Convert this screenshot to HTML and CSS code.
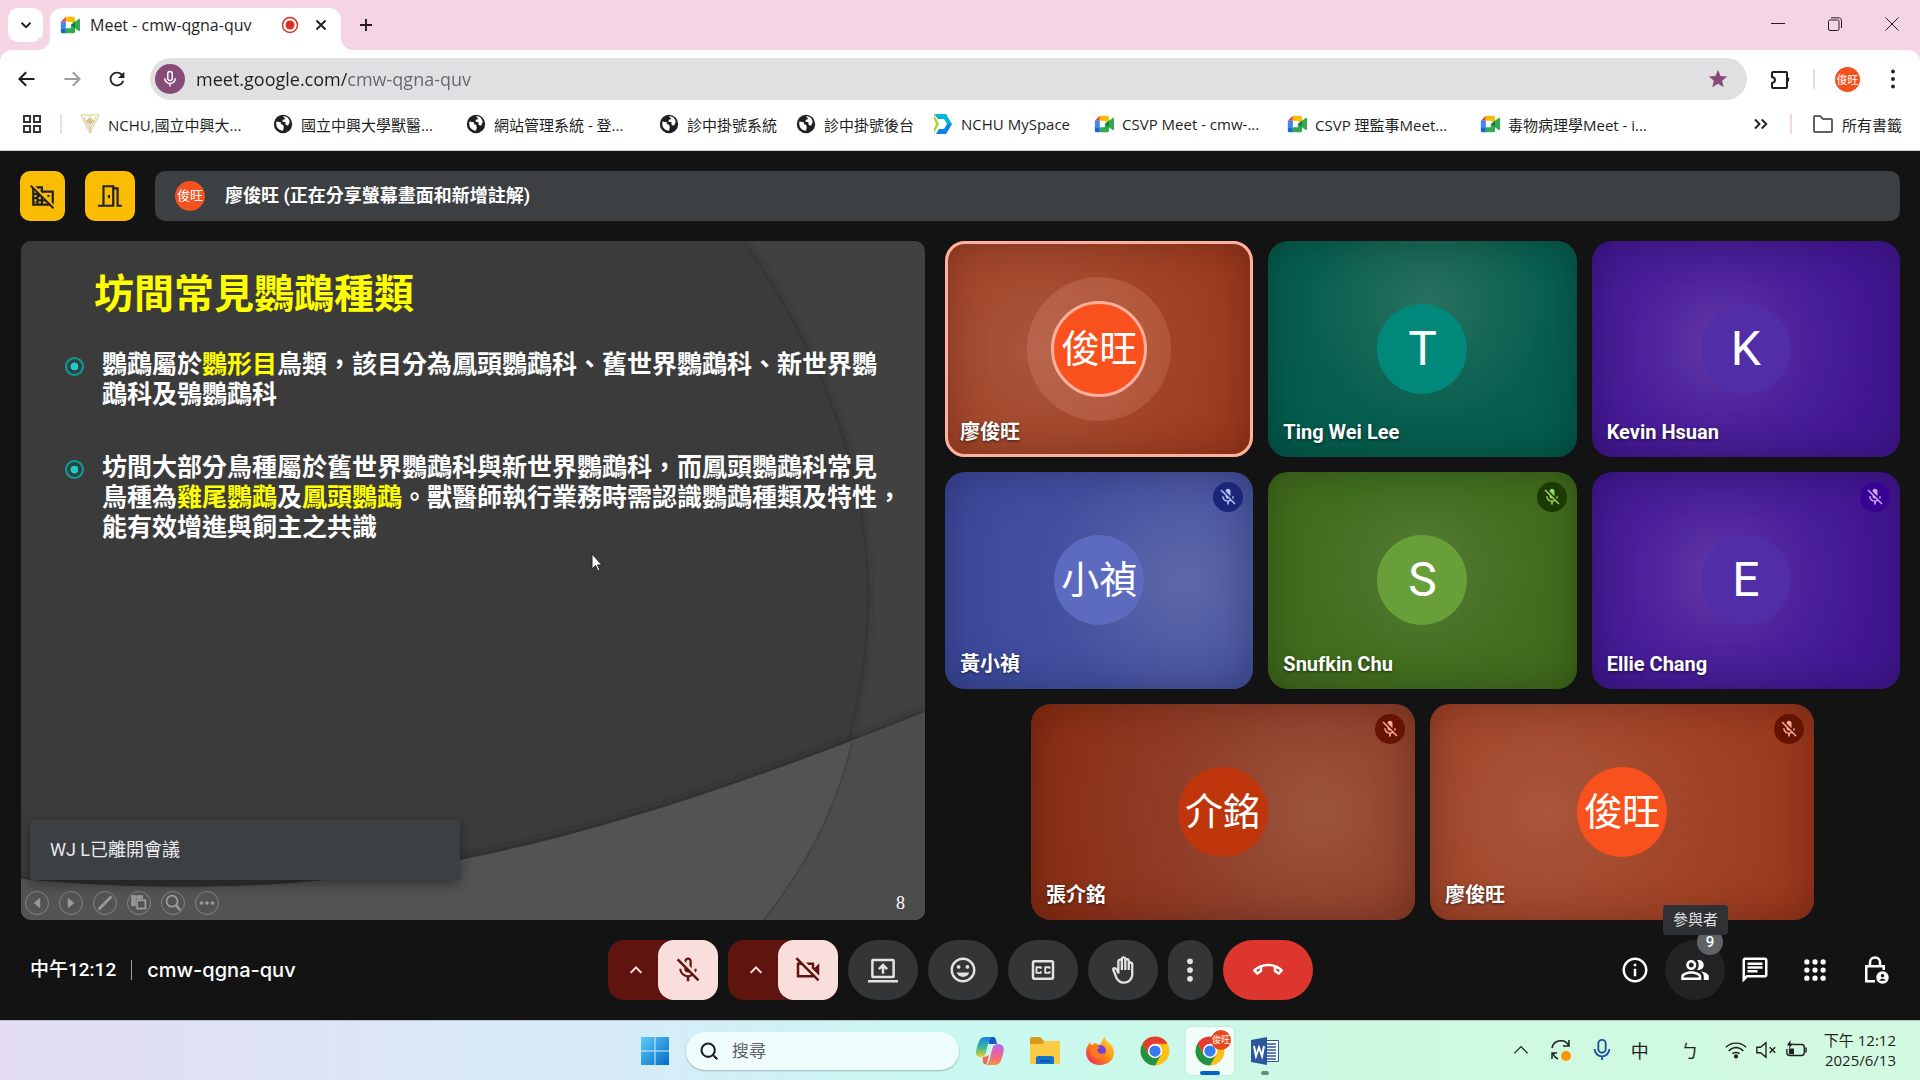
FILE: index.html
```html
<!DOCTYPE html>
<html lang="zh-Hant">

<head>
    <meta charset="utf-8">
    <title>Meet - cmw-qgna-quv</title>
    <meta name="viewport" content="width=device-width, initial-scale=1">
    <link rel="stylesheet" href="styles.css">
</head>

<body>

    <!-- Shared icons -->
    <svg class="sprite" aria-hidden="true">
        <symbol id="mic-off" viewBox="0 0 24 24">
            <path d="M19 11h-1.7c0 .74-.16 1.43-.43 2.05l1.23 1.23c.56-.98.9-2.09.9-3.28zm-4.02.17c0-.06.02-.11.02-.17V5c0-1.66-1.34-3-3-3S9 3.34 9 5v.18l5.98 5.99zM4.27 3L3 4.27l6.01 6.01V11c0 1.66 1.33 3 2.99 3 .22 0 .44-.03.65-.08l1.66 1.66c-.71.33-1.5.52-2.31.52-2.76 0-5.3-2.1-5.3-5.1H5c0 3.41 2.72 6.23 6 6.72V21h2v-3.28c.91-.13 1.77-.45 2.54-.9L19.73 21 21 19.73 4.27 3z" />
        </symbol>
        <symbol id="chevron-up" viewBox="0 0 24 24">
            <path d="M12 8l-6 6 1.41 1.41L12 10.83l4.59 4.58L18 14z" />
        </symbol>
        <symbol id="globe" viewBox="0 0 24 24">
            <circle cx="12" cy="12" r="11" />
            <path fill="#fff" d="M4 9l5 1c1 0 1 2 0 2l3 1 1 3-1 4c-5 0-9-4-8-11zM12 3c4-1 8 3 8 7l-2 4-3-1V10l-4-1 1-2 3-1z" />
        </symbol>
        <symbol id="meet" viewBox="0 0 24 24">
            <path fill="#ea4335" d="M1 8l6-6v6z" />
            <path fill="#4285f4" d="M1 8h6v8H1z" />
            <path fill="#1967d2" d="M1 16h6v6H3c-1 0-2-1-2-2z" />
            <path fill="#fbbc04" d="M7 2h9c1 0 2 1 2 2v8l-5-4H7z" />
            <path fill="#34a853" d="M7 16h6v-4l5-4 4-3c1-1 2 0 2 1v12c0 1-1 2-2 1l-4-3v4c0 1-1 2-2 2H7z" />
            <path fill="#188038" d="M13 12l5-4v8z" />
        </symbol>
        <symbol id="chrome" viewBox="0 0 48 48">
            <circle cx="24" cy="24" r="23" fill="#fbc116" />
            <path fill="#e33b2e" d="M4 12.5A23 23 0 0 1 44 12.5H24L14 30z" />
            <path fill="#229342" d="M4 12.5A23 23 0 0 0 24 47L34 29.5 14 30z" />
            <circle cx="24" cy="24" r="11.5" fill="#fff" />
            <circle cx="24" cy="24" r="9" fill="#3a7af0" />
        </symbol>
    </svg>

    <header class="browser">
        <div class="tab-strip">
            <button class="tab-search" type="button" aria-label="搜尋分頁">
                <svg class="icon-18 line" viewBox="0 0 24 24"><path d="M6 9l6 6 6-6" /></svg>
            </button>
            <div class="tab">
                <svg class="icon-20"><use href="#meet" /></svg>
                <span class="tab-title">Meet - cmw-qgna-quv</span>
                <svg class="icon-18" viewBox="0 0 24 24"><circle cx="12" cy="12" r="10" fill="none" stroke="#d93025" stroke-width="2" /><circle cx="12" cy="12" r="6" fill="#d93025" /></svg>
                <button type="button" aria-label="關閉分頁">
                    <svg class="icon-18 line" viewBox="0 0 24 24"><path d="M6 6l12 12M18 6L6 18" /></svg>
                </button>
            </div>
            <button class="new-tab" type="button" aria-label="新分頁">
                <svg class="icon-18 line" viewBox="0 0 24 24"><path d="M12 4v16M4 12h16" /></svg>
            </button>
            <div class="window-buttons">
                <button type="button" aria-label="最小化"><svg viewBox="0 0 14 14"><path d="M0 6.5h14" /></svg></button>
                <button type="button" aria-label="還原"><svg viewBox="0 0 14 14"><rect x=".5" y="3" width="10.5" height="10.5" rx="1.5" /><path d="M3 .8h7.5c2 0 3 1 3 3V11" /></svg></button>
                <button type="button" aria-label="關閉"><svg viewBox="0 0 14 14"><path d="M.5.5l13 13M13.5.5l-13 13" /></svg></button>
            </div>
        </div>

        <div class="toolbar">
            <button type="button" aria-label="上一頁"><svg class="icon-20 line" viewBox="0 0 24 24"><path d="M21 12H4M11 4l-8 8 8 8" /></svg></button>
            <button class="faded" type="button" aria-label="下一頁"><svg class="icon-20 line" viewBox="0 0 24 24"><path d="M3 12h17M13 4l8 8-8 8" /></svg></button>
            <button type="button" aria-label="重新載入"><svg class="icon-22" viewBox="0 0 24 24"><path d="M17.65 6.35C16.2 4.9 14.21 4 12 4c-4.42 0-7.99 3.58-7.99 8s3.57 8 7.99 8c3.73 0 6.84-2.55 7.73-6h-2.08c-.82 2.33-3.04 4-5.65 4-3.31 0-6-2.69-6-6s2.69-6 6-6c1.66 0 3.14.69 4.22 1.78L13 11h7V4l-2.35 2.35z" /></svg></button>
            <div class="omnibox">
                <span class="mic-chip">
                    <svg class="icon-18" viewBox="0 0 24 24" fill="none" stroke="#fff" stroke-width="2"><rect x="9" y="2" width="6" height="12" rx="3" /><path d="M5 11a7 7 0 0 0 14 0M12 18v4" /></svg>
                </span>
                <input type="text" aria-label="網址" value="meet.google.com/cmw-qgna-quv">
                <button type="button" aria-label="加入書籤"><svg class="icon-22 star" viewBox="0 0 24 24"><path d="M12 17.27L18.18 21l-1.64-7.03L22 9.24l-7.19-.61L12 2 9.19 8.63 2 9.24l5.46 4.73L5.82 21z" /></svg></button>
            </div>
            <div class="toolbar-end">
                <button type="button" aria-label="擴充功能"><svg class="icon-24" viewBox="0 0 24 24" fill="none" stroke="#1f1f1f" stroke-width="2"><path d="M4 5h13a1 1 0 0 1 1 1v14a1 1 0 0 1-1 1H4a1 1 0 0 1-1-1v-4c4-1 4-5 0-6V6a1 1 0 0 1 1-1z" /><path fill="#1f1f1f" stroke="none" d="M8 5a3 3 0 0 1 5 0zM19 10a3 3 0 0 1 0 5z" /></svg></button>
                <span class="divider"></span>
                <span class="chip chip-small">俊旺</span>
                <button type="button" aria-label="選單"><svg class="icon-20" viewBox="0 0 24 24"><circle cx="12" cy="3" r="2.3" /><circle cx="12" cy="12" r="2.3" /><circle cx="12" cy="21" r="2.3" /></svg></button>
            </div>
        </div>

        <nav class="bookmarks">
            <button type="button" aria-label="應用程式"><svg class="icon-20" viewBox="0 0 20 20" fill="none" stroke="#333" stroke-width="2"><path d="M2 2h6v6H2zM12 2h6v6h-6zM2 12h6v6H2zM12 12h6v6h-6z" /></svg></button>
            <span class="divider"></span>
            <a class="long" href="#"><svg class="icon-20" viewBox="0 0 20 20"><path d="M1 1h18l-9 18zM4 3l6 12 6-12M10 1v18M5 7h10" fill="none" stroke="#d8c48a" /><circle cx="10" cy="7" r="3" fill="#d8c48a" /></svg>NCHU,國立中興大...</a>
            <a class="long" href="#"><svg class="icon-20"><use href="#globe" /></svg>國立中興大學獸醫...</a>
            <a class="long" href="#"><svg class="icon-20"><use href="#globe" /></svg>網站管理系統 - 登...</a>
            <a href="#"><svg class="icon-20"><use href="#globe" /></svg>診中掛號系統</a>
            <a href="#"><svg class="icon-20"><use href="#globe" /></svg>診中掛號後台</a>
            <a class="medium" href="#"><svg class="icon-20" viewBox="0 0 20 20"><path fill="#00b8d4" d="M1 0h12l6 10h-5l-3-5H5z" /><path fill="#0a84e8" d="M19 10l-6 10H3l3-5h5l3-5z" /><path fill="#a8d820" d="M1 1l5 9-5 9v-4l2-5-2-5z" /></svg>NCHU MySpace</a>
            <a class="long" href="#"><svg class="icon-20"><use href="#meet" /></svg>CSVP Meet - cmw-...</a>
            <a class="long" href="#"><svg class="icon-20"><use href="#meet" /></svg>CSVP 理監事Meet...</a>
            <a class="long" href="#"><svg class="icon-20"><use href="#meet" /></svg>毒物病理學Meet - i...</a>
            <div class="bookmarks-end">
                <button type="button" aria-label="更多書籤"><svg class="icon-18 line" viewBox="0 0 24 24"><path d="M4 6l6 6-6 6M13 6l6 6-6 6" /></svg></button>
                <span class="divider"></span>
                <a href="#"><svg class="icon-22" viewBox="0 0 22 22" fill="none" stroke="#5f6368" stroke-width="2"><path d="M2 4a1 1 0 0 1 1-1h5l3 3h8a1 1 0 0 1 1 1v11a1 1 0 0 1-1 1H3a1 1 0 0 1-1-1z" /></svg>所有書籤</a>
            </div>
        </nav>
    </header>

    <main class="meeting">
        <div class="banner-row">
            <button class="alert narrow" type="button" aria-label="外部參與者">
                <svg class="icon-26" viewBox="0 0 24 24"><path fill-rule="evenodd" d="M8 5h2v2h-1l3 3V9h8v9l2 2V7H12V3H5l3 3zM16 11h2v2h-2zM1.300 1.800L0 3.100 2 5v16h16l3 3 1.300-1.300zM4 7l2 2H4zm0 4h2v2H4zm0 4h2v2H4zm2 4H4v-1h2zm4 0H8v-2h2zm0-4H8v-2h2zm2 4v-2h2l2 2zm0-4v-1l1 1z" /></svg>
            </button>
            <button class="alert" type="button" aria-label="開放存取">
                <svg class="icon-26" viewBox="0 0 24 24" fill="none" stroke="#202124" stroke-width="2"><path d="M1 21h5V3h9v18H6M15 5h4v16h4" /><path d="M11 11v3" /></svg>
            </button>
            <div class="banner">
                <span class="chip">俊旺</span>
                <span>廖俊旺 (正在分享螢幕畫面和新增註解)</span>
            </div>
        </div>

        <div class="stage">
            <section class="slide">
                <svg class="slide-art" viewBox="0 0 904 679" preserveAspectRatio="none" aria-hidden="true">
                    <defs>
                        <filter id="soft" x="-5%" y="-5%" width="110%" height="110%"><feGaussianBlur stdDeviation="4" /></filter>
                    </defs>
                    <rect width="904" height="679" fill="#414141" />
                    <path d="M721 0C806 120 846 240 846 355C846 480 800 600 743 679H0V0z" fill="#282828" filter="url(#soft)" />
                    <path d="M721 0C806 120 846 240 846 355C846 480 800 600 743 679H0V0z" fill="#3b3b3b" />
                    <path d="M0 638C300 665 520 625 904 471V679H0z" fill="#202020" filter="url(#soft)" />
                    <path d="M0 638C300 665 520 625 904 471V679H0z" fill="#535353" />
                    <path d="M831 502C815 570 785 625 743 679H904V471z" fill="#4c4c4c" />
                    <path d="M831 502C815 570 785 625 743 679" fill="none" stroke="#434343" stroke-width="2" />
                </svg>
                <div class="slide-body">
                    <h1>坊間常見鸚鵡種類</h1>
                    <ul>
                        <li>鸚鵡屬於<em>鸚形目</em>鳥類，該目分為鳳頭鸚鵡科、舊世界鸚鵡科、新世界鸚<br>鵡科及鴞鸚鵡科</li>
                        <li>坊間大部分鳥種屬於舊世界鸚鵡科與新世界鸚鵡科，而鳳頭鸚鵡科常見<br>鳥種為<em>雞尾鸚鵡</em>及<em>鳳頭鸚鵡</em>。獸醫師執行業務時需認識鸚鵡種類及特性，<br>能有效增進與飼主之共識</li>
                    </ul>
                </div>
                <svg class="pointer" viewBox="0 0 12 19"><path d="M1 1v15l3.500-3.500 2.500 5.500 2-1-2.500-5H11z" fill="#fff" stroke="#222" /></svg>
                <div class="slide-footer">
                    <button type="button" aria-label="上一張"><svg viewBox="0 0 24 24"><path class="solid" d="M15 7v10l-6-5z" /></svg></button>
                    <button type="button" aria-label="下一張"><svg viewBox="0 0 24 24"><path class="solid" d="M9 7v10l6-5z" /></svg></button>
                    <button type="button" aria-label="畫筆"><svg viewBox="0 0 24 24"><path d="M5 19L19 5" stroke-width="3" /></svg></button>
                    <button type="button" aria-label="所有投影片"><svg viewBox="0 0 24 24"><path class="solid" d="M4 4h5v3H4zM10 4h6v3h-6zM4 8h4v7H4z" /><path d="M10 9h9v9h-9z" /></svg></button>
                    <button type="button" aria-label="放大"><svg viewBox="0 0 24 24"><circle cx="11" cy="10" r="6" /><path d="M15 14l5 6" stroke-width="3" /></svg></button>
                    <button type="button" aria-label="更多"><svg viewBox="0 0 24 24"><circle class="solid" cx="6" cy="12" r="1.500" /><circle class="solid" cx="12" cy="12" r="1.500" /><circle class="solid" cx="18" cy="12" r="1.500" /></svg></button>
                    <span class="page-number">8</span>
                </div>
                <div class="toast" role="status">WJ L已離開會議</div>
            </section>

            <section class="tiles">
                <div class="tile-row">
                    <article class="tile orange speaking"><span class="avatar">俊旺</span><span class="name">廖俊旺</span></article>
                    <article class="tile teal"><span class="avatar latin">T</span><span class="name">Ting Wei Lee</span></article>
                    <article class="tile purple"><span class="avatar latin">K</span><span class="name">Kevin Hsuan</span></article>
                </div>
                <div class="tile-row">
                    <article class="tile indigo"><span class="avatar">小禎</span><span class="name">黃小禎</span><span class="muted"><svg class="icon-20"><use href="#mic-off" /></svg></span></article>
                    <article class="tile green"><span class="avatar latin">S</span><span class="name">Snufkin Chu</span><span class="muted"><svg class="icon-20"><use href="#mic-off" /></svg></span></article>
                    <article class="tile purple"><span class="avatar latin">E</span><span class="name">Ellie Chang</span><span class="muted"><svg class="icon-20"><use href="#mic-off" /></svg></span></article>
                </div>
                <div class="tile-row last">
                    <article class="tile rust"><span class="avatar">介銘</span><span class="name">張介銘</span><span class="muted"><svg class="icon-20"><use href="#mic-off" /></svg></span></article>
                    <article class="tile orange"><span class="avatar">俊旺</span><span class="name">廖俊旺</span><span class="muted"><svg class="icon-20"><use href="#mic-off" /></svg></span></article>
                </div>
            </section>
        </div>

        <footer class="call-bar">
            <div class="call-info">
                <time>中午12:12</time>
                <span class="meeting-code">cmw-qgna-quv</span>
            </div>
            <div class="controls">
                <div class="device">
                    <button class="more" type="button" aria-label="音訊設定"><svg class="icon-24"><use href="#chevron-up" /></svg></button>
                    <button class="off" type="button" aria-label="開啟麥克風"><svg class="icon-30" viewBox="0 0 24 24"><path d="M10.8 4.9c0-.66.54-1.2 1.2-1.2s1.2.54 1.2 1.2l-.01 3.91L15 10.6V5c0-1.66-1.34-3-3-3-1.54 0-2.79 1.16-2.96 2.65l1.76 1.76V4.9zM19 11h-1.7c0 .58-.1 1.13-.27 1.64l1.27 1.27c.44-.88.7-1.87.7-2.91zM4.41 2.86L3 4.27l6 6V11c0 1.66 1.34 3 3 3 .23 0 .44-.03.65-.08l1.66 1.66c-.71.33-1.5.52-2.31.52-2.76 0-5.3-2.1-5.3-5.1H5c0 3.41 2.72 6.23 6 6.72V21h2v-3.28c.91-.13 1.77-.45 2.55-.9l4.2 4.2 1.41-1.41L4.41 2.86z" /></svg></button>
                </div>
                <div class="device">
                    <button class="more" type="button" aria-label="視訊設定"><svg class="icon-24"><use href="#chevron-up" /></svg></button>
                    <button class="off" type="button" aria-label="開啟攝影機"><svg class="icon-30" viewBox="0 0 24 24"><path d="M9.56 8l-2-2-4.15-4.14L2 3.27 4.73 6H4c-.55 0-1 .45-1 1v10c0 .55.45 1 1 1h12c.21 0 .39-.08.55-.18L19.73 21l1.41-1.41-8.86-8.86L9.56 8zM5 16V8h1.73l8 8H5zm10-8v2.61l6 6V6.5l-4 4V7c0-.55-.45-1-1-1h-5.61l2 2H15z" /></svg></button>
                </div>
                <button class="round" type="button" aria-label="分享螢幕畫面"><svg class="icon-30" viewBox="0 0 24 24"><path d="M4 3h16a1.5 1.5 0 0 1 1.5 1.5V17a1.5 1.5 0 0 1-1.5 1.5H4A1.5 1.5 0 0 1 2.5 17V4.5A1.5 1.5 0 0 1 4 3zm.5 2v11.5h15V5zM0 20h24v2H0zM12 6.5l4 4-1.4 1.4-1.6-1.6V15h-2v-4.7l-1.6 1.6L8 10.5z" fill-rule="evenodd" /></svg></button>
                <button class="round" type="button" aria-label="傳送回應"><svg class="icon-30" viewBox="0 0 24 24"><path d="M11.99 2C6.47 2 2 6.48 2 12s4.47 10 9.99 10C17.52 22 22 17.52 22 12S17.52 2 11.99 2zM12 20c-4.42 0-8-3.58-8-8s3.58-8 8-8 8 3.58 8 8-3.58 8-8 8zm3.5-9c.83 0 1.5-.67 1.5-1.5S16.33 8 15.5 8 14 8.67 14 9.5s.67 1.5 1.5 1.5zm-7 0c.83 0 1.5-.67 1.5-1.5S9.33 8 8.5 8 7 8.67 7 9.5 7.67 11 8.5 11zm3.5 6.5c2.33 0 4.31-1.46 5.11-3.5H6.89c.8 2.04 2.78 3.5 5.11 3.5z" /></svg></button>
                <button class="round" type="button" aria-label="開啟字幕"><svg class="icon-30" viewBox="0 0 24 24"><path d="M19 4H5c-1.11 0-2 .9-2 2v12c0 1.1.89 2 2 2h14c1.1 0 2-.9 2-2V6c0-1.1-.9-2-2-2zm0 14H5V6h14v12zM7 15h3c.55 0 1-.45 1-1v-1H9.5v.5h-2v-3h2v.5H11v-1c0-.55-.45-1-1-1H7c-.55 0-1 .45-1 1v4c0 .55.45 1 1 1zm7 0h3c.55 0 1-.45 1-1v-1h-1.5v.5h-2v-3h2v.5H18v-1c0-.55-.45-1-1-1h-3c-.55 0-1 .45-1 1v4c0 .55.45 1 1 1z" /></svg></button>
                <button class="round" type="button" aria-label="舉手"><svg class="icon-30" viewBox="0 0 26 26"><path d="M22 8c0-1.38-1.12-2.5-2.5-2.5-.17 0-.34.02-.5.05V5c0-1.38-1.12-2.5-2.5-2.5-.23 0-.46.03-.67.09C15.46 1.66 14.56 1 13.5 1c-1.23 0-2.25.89-2.46 2.06-.17-.04-.35-.06-.54-.06C9.12 3 8 4.12 8 5.5v5.89c-.34-.31-.76-.54-1.22-.66l-.77-.21c-.83-.23-1.7.09-2.19.83-.38.57-.4 1.31-.15 1.95l2.56 6.43C7.49 22.91 10.57 25 14 25c4.42 0 8-3.58 8-8V8zm-2 9c0 3.31-2.69 6-6 6-2.61 0-4.95-1.59-5.91-4.01l-2.6-6.54.53.14c.46.12.83.46 1 .9L8 16h2V5.5c0-.28.22-.5.5-.5s.5.22.5.5V13h2V3.5c0-.28.22-.5.5-.5s.5.22.5.5V13h2V5c0-.28.22-.5.5-.5s.5.22.5.5v8h2V8c0-.28.22-.5.5-.5s.5.22.5.5v9z" /></svg></button>
                <button class="round slim" type="button" aria-label="更多選項"><svg class="icon-30" viewBox="0 0 24 24"><circle cx="12" cy="5" r="2.3" /><circle cx="12" cy="12" r="2.3" /><circle cx="12" cy="19" r="2.3" /></svg></button>
                <button class="hang-up" type="button" aria-label="退出通話"><svg class="icon-30" viewBox="0 0 24 24"><path d="M18.59 10.52c1.05.51 2.04 1.15 2.96 1.91l-1.07 1.07c-.58-.47-1.21-.89-1.88-1.27v-1.71m-13.2 0v1.7c-.65.37-1.28.79-1.87 1.27l-1.07-1.07c.91-.75 1.9-1.38 2.94-1.9M12 7C7.46 7 3.34 8.78.29 11.67c-.18.18-.29.43-.29.71s.11.53.29.7l2.48 2.48c.18.18.43.29.71.29.27 0 .52-.1.7-.28.79-.74 1.69-1.36 2.66-1.85.33-.16.56-.51.56-.9v-3.1C8.85 9.25 10.4 9 12 9s3.15.25 4.59.73v3.1c0 .4.23.74.56.9.98.49 1.88 1.11 2.67 1.85.18.17.43.28.7.28.28 0 .53-.11.71-.29l2.48-2.48c.18-.18.29-.43.29-.71s-.11-.53-.29-.71C20.66 8.78 16.54 7 12 7z" /></svg></button>
            </div>
            <div class="side-buttons">
                <button type="button" aria-label="會議詳細資料"><svg class="icon-30" viewBox="0 0 24 24"><path d="M11 7h2v2h-2zm0 4h2v6h-2zm1-9C6.48 2 2 6.48 2 12s4.48 10 10 10 10-4.48 10-10S17.52 2 12 2zm0 18c-4.41 0-8-3.59-8-8s3.59-8 8-8 8 3.59 8 8-3.59 8-8 8z" /></svg></button>
                <button class="hovered" type="button" aria-label="參與者">
                    <svg class="icon-30" viewBox="0 0 24 24"><path d="M16.67 13.13C18.04 14.06 19 15.32 19 17v3h4v-3c0-2.18-3.57-3.47-6.33-3.87zM15 12c2.21 0 4-1.79 4-4s-1.79-4-4-4c-.47 0-.91.1-1.33.24C14.5 5.27 15 6.58 15 8s-.5 2.73-1.33 3.76c.42.14.86.24 1.33.24zM9 12c2.21 0 4-1.79 4-4s-1.79-4-4-4-4 1.79-4 4 1.79 4 4 4zm0-6c1.1 0 2 .9 2 2s-.9 2-2 2-2-.9-2-2 .9-2 2-2zM9 13c-2.67 0-8 1.34-8 4v3h16v-3c0-2.66-5.33-4-8-4zm6 5H3v-.99C3.2 16.29 6.3 15 9 15s5.8 1.29 6 2v1z" /></svg>
                    <span class="count">9</span>
                    <span class="tooltip">參與者</span>
                </button>
                <button type="button" aria-label="即時通訊"><svg class="icon-30" viewBox="0 0 24 24"><path d="M4 4h16v12H5.17L4 17.17V4m0-2c-1.1 0-1.99.9-1.99 2L2 22l4-4h14c1.1 0 2-.9 2-2V4c0-1.1-.9-2-2-2H4zm2 10h8v2H6v-2zm0-3h12v2H6V9zm0-3h12v2H6V6z" /></svg></button>
                <button type="button" aria-label="活動"><svg class="icon-30" viewBox="0 0 24 24"><circle cx="5.5" cy="5.5" r="2.1" /><circle cx="12" cy="5.5" r="2.1" /><circle cx="18.5" cy="5.5" r="2.1" /><circle cx="5.5" cy="12" r="2.1" /><circle cx="12" cy="12" r="2.1" /><circle cx="18.5" cy="12" r="2.1" /><circle cx="5.5" cy="18.5" r="2.1" /><circle cx="12" cy="18.5" r="2.1" /><circle cx="18.5" cy="18.5" r="2.1" /></svg></button>
                <button type="button" aria-label="主辦人控制項"><svg class="icon-30" viewBox="0 0 24 24"><path fill="none" stroke="#fff" stroke-width="2" d="M12 21H5V9h14v3M8 9V6a4 4 0 0 1 8 0v3" /><circle cx="18" cy="18" r="5" /><circle cx="18" cy="16.5" r="1.4" fill="#131314" /><path fill="#131314" d="M15.5 20.5c1-2 4-2 5 0z" /></svg></button>
            </div>
        </footer>
    </main>

    <footer class="taskbar">
        <div class="apps">
            <button type="button" aria-label="開始"><svg class="icon-30" viewBox="0 0 30 30"><defs><linearGradient id="win" gradientUnits="userSpaceOnUse" x1="0" y1="0" x2="30" y2="30"><stop stop-color="#5fd0fb" /><stop offset="1" stop-color="#0067c5" /></linearGradient></defs><path fill="url(#win)" d="M1 1h13.5v13.5H1zM15.5 1H29v13.5H15.5zM1 15.5h13.5V29H1zM15.5 15.5H29V29H15.5z" /></svg></button>
            <label class="search">
                <svg class="icon-20 line" viewBox="0 0 24 24"><circle cx="11" cy="11" r="8" /><path d="M17 17l5 5" /></svg>
                <input type="text" placeholder="搜尋" aria-label="搜尋">
            </label>
            <button type="button" aria-label="Copilot">
                <svg class="icon-30" viewBox="0 0 30 30">
                    <defs>
                        <linearGradient id="cop-a" x2="0" y2="1"><stop stop-color="#1b7fe0" /><stop offset=".5" stop-color="#35b8a0" /><stop offset="1" stop-color="#f2d020" /></linearGradient>
                        <linearGradient id="cop-b" x2="0" y2="1"><stop stop-color="#b070f0" /><stop offset=".5" stop-color="#f0609a" /><stop offset="1" stop-color="#f8903c" /></linearGradient>
                    </defs>
                    <path fill="#1558c8" d="M13 1h5c3 0 3 3 4 7h-8z" />
                    <path fill="url(#cop-a)" d="M10 1h7c-3 2-4 8-6 15-1 4-3 6-6 5-6-1-4-6-3-10C4 5 5 1 10 1z" />
                    <path fill="url(#cop-b)" d="M20 29h-9c4-2 4-8 6-15 1-5 3-6 7-6 6 1 5 6 4 10-2 7-3 11-8 11z" />
                    <path fill="#ee6a5a" d="M8 21c3 0 4-1 6-2l-2 8c-2 3-5 1-4-6z" />
                </svg>
            </button>
            <button type="button" aria-label="檔案總管"><svg class="icon-32" viewBox="0 0 32 32"><path fill="#d99a1c" d="M1 4c0-1 1-2 2-2h8l4 4h14c1 0 2 1 2 2v5H1z" /><path fill="#fbcb45" d="M1 9h12l3-3h13c1 0 2 1 2 2v20c0 1-1 1-2 1H3c-1 0-2 0-2-1z" /><path fill="#1372c9" d="M7 29v-6c0-1 1-2 2-2h14c1 0 2 1 2 2v6z" /><path fill="#0b569f" d="M11 25h10v2H11z" /></svg></button>
            <button type="button" aria-label="Firefox">
                <svg class="icon-30" viewBox="0 0 30 30">
                    <defs><linearGradient id="fox" x1="1" x2="0" y2="1"><stop stop-color="#ffe33a" /><stop offset=".5" stop-color="#ff8a16" /><stop offset="1" stop-color="#ec1168" /></linearGradient></defs>
                    <path fill="url(#fox)" d="M15 29C6 29 1 23 1 16c0-4 2-7 4-10l1 3 4-2c2 0 3 2 5 2 2-3 2-6 5-8 0 4 3 4 4 7l1-1c3 4 4 6 4 9 0 8-6 13-14 13z" />
                    <circle cx="15" cy="15" r="6" fill="#7542d8" />
                    <path fill="#ff7a1c" d="M6 10c3-1 6 0 9 1l-3 3c1 4 5 5 9 2-1 5-5 7-9 6-5-1-8-6-6-12z" />
                </svg>
            </button>
            <button type="button" aria-label="Chrome"><svg class="icon-30"><use href="#chrome" /></svg></button>
            <button class="active" type="button" aria-label="Chrome 視窗"><svg class="icon-30"><use href="#chrome" /></svg><span class="profile">俊旺</span></button>
            <button class="running" type="button" aria-label="Word"><svg class="icon-30" viewBox="0 0 30 30"><path fill="#fff" stroke="#2b579a" d="M14 4.500h14.500v21H14z" /><path stroke="#2b579a" stroke-width="1.500" d="M17 8h9M17 11h9M17 14h9M17 17h9M17 20h9M17 23h9" /><path fill="#2b579a" d="M1 4l16-3v28L1 26z" /><path fill="none" stroke="#fff" stroke-width="2" d="M4 10l2 10 3-8.500L12 20l2-10" /></svg></button>
        </div>
        <div class="tray">
            <button type="button" aria-label="顯示隱藏的圖示"><svg class="icon-20 line thin" viewBox="0 0 24 24"><path d="M4 16l8-8 8 8" /></svg></button>
            <svg class="icon-24 line thin" viewBox="0 0 24 24"><path d="M3 10a9 9 0 0 1 17-2M20 2v6h-6M9 21a9 9 0 0 1-5-6M3 21v-6h5" /><circle cx="17" cy="18" r="5" fill="#ff9800" stroke="none" /></svg>
            <svg class="icon-22 tray-mic" viewBox="0 0 24 24"><rect x="8" y="1" width="8" height="14" rx="4" /><path d="M4 11a8 8 0 0 0 16 0M12 19v4" /></svg>
            <span class="ime">中</span>
            <span class="ime wide">ㄅ</span>
            <div class="status">
                <svg class="icon-22 line thin" viewBox="0 0 24 24"><path d="M1 9c6-6 16-6 22 0M4 13c5-5 11-5 16 0M8 16c3-2 5-2 8 0" /><circle cx="12" cy="19" r="1.500" fill="#1f1f1f" /></svg>
                <svg class="icon-22 line thin" viewBox="0 0 24 24"><path d="M2 9h4l6-5v16l-6-5H2zM16 9l6 6M22 9l-6 6" /></svg>
                <svg class="icon-22 line thin" viewBox="0 0 24 24"><path d="M8 6h10c1.500 0 3 1 3 3v6c0 2-1 3-3 3H5c-2 0-3-1-3-3v-4M22 10h1v4h-1" /><path d="M5 16V11h4v5z" fill="#1f1f1f" /><path d="M6 1L2 7h3l-1 4 5-6H6z" fill="#1f1f1f" stroke="none" /></svg>
            </div>
            <time>下午 12:12<br>2025/6/13</time>
        </div>
    </footer>

</body>

</html>
```
FILE: styles.css
```css
* {
    margin: 0;
    padding: 0;
    box-sizing: border-box;
}

body {
    display: flex;
    flex-direction: column;
    min-height: 100vh;
    font-family: "Open Sans", "Noto Sans CJK TC", sans-serif;
    font-size: 15px;
    color: #1f1f1f;
    background-color: #131314;
}

button {
    display: flex;
    align-items: center;
    justify-content: center;
    flex-shrink: 0;
    border: 0;
    background: none;
    font: inherit;
    color: inherit;
    cursor: pointer;
}

input {
    border: 0;
    outline: 0;
    background: none;
    font: inherit;
}

a {
    color: inherit;
    text-decoration: none;
}

svg {
    display: block;
    flex-shrink: 0;
    fill: currentColor;
}

svg[fill="none"] {
    fill: none;
}

/** Icon sizes **/
.sprite {
    position: absolute;
    width: 0;
    height: 0;
}

.icon-18 {
    width: 18px;
    height: 18px;
}

.icon-20 {
    width: 20px;
    height: 20px;
}

.icon-22 {
    width: 22px;
    height: 22px;
}

.icon-24 {
    width: 24px;
    height: 24px;
}

.icon-26 {
    width: 26px;
    height: 26px;
}

.icon-30 {
    width: 30px;
    height: 30px;
}

.icon-32 {
    width: 32px;
    height: 32px;
}

.line {
    fill: none;
    stroke: currentColor;
    stroke-width: 2.5;
}

.line.thin {
    stroke-width: 1.5;
}

/** Tab strip **/
.browser {
    background-color: #f5d5e3;
}

.tab-strip {
    display: flex;
    align-items: flex-end;
    height: 50px;
    padding-left: 8px;
}

.tab-search {
    width: 35px;
    height: 34px;
    margin-bottom: 8px;
    border-radius: 10px;
    background-color: white;
}

.tab {
    position: relative;
    display: flex;
    align-items: center;
    gap: 10px;
    width: 291px;
    height: 42px;
    margin-left: 7px;
    padding: 0 10px 8px 10px;
    border-radius: 12px 12px 0 0;
    background-color: white;
}

/* curved feet of the active tab */
.tab:before,
.tab:after {
    content: "";
    position: absolute;
    bottom: 0;
    width: 12px;
    height: 12px;
}

.tab:before {
    left: -12px;
    background: radial-gradient(circle at 0 0, #f5d5e3 12px, white 12px);
}

.tab:after {
    right: -12px;
    background: radial-gradient(circle at 100% 0, #f5d5e3 12px, white 12px);
}

.tab-title {
    flex: 1;
    font-size: 16px;
    white-space: nowrap;
}

.tab button {
    width: 20px;
    height: 20px;
    margin-left: 2px;
}

.new-tab {
    width: 50px;
    height: 50px;
}

.window-buttons {
    display: flex;
    margin-left: auto;
}

.window-buttons button {
    width: 57px;
    height: 48px;
    margin-bottom: 2px;
}

.window-buttons svg {
    width: 14px;
    height: 14px;
    fill: none;
    stroke: #1f1f1f;
}

/** Address row **/
.toolbar {
    display: flex;
    align-items: center;
    height: 56px;
    padding: 2px 9px 0 8px;
    border-radius: 12px 12px 0 0;
    background-color: white;
}

.toolbar > button {
    width: 38px;
    height: 38px;
    margin-right: 7px;
}

.toolbar > .faded {
    color: #9e9e9e;
}

.omnibox {
    display: flex;
    align-items: center;
    flex: 1;
    height: 42px;
    margin-left: 7px;
    padding: 0 18px 0 5px;
    border-radius: 21px;
    background-color: #e0e0e2;
}

.omnibox input {
    flex: 1;
    min-width: 0;
    height: 30px;
    margin-left: 11px;
    font-size: 18px;
    /* host dark, path grey */
    background: linear-gradient(90deg, #1f1f1f 152px, #63666a 152px);
    -webkit-background-clip: text;
    background-clip: text;
    color: transparent;
}

.mic-chip {
    display: grid;
    place-items: center;
    width: 30px;
    height: 30px;
    border-radius: 50%;
    background-color: #884a77;
}

.star {
    fill: #884a77;
}

.toolbar-end {
    display: flex;
    align-items: center;
}

.toolbar-end button {
    width: 36px;
    height: 36px;
}

.toolbar-end button:first-child {
    margin: 0 14px 0 16px;
}

.divider {
    width: 2px;
    height: 20px;
    background-color: #f5d5e3;
}

.chip {
    display: grid;
    place-items: center;
    width: 30px;
    height: 30px;
    border-radius: 50%;
    background-color: #f4511e;
    color: white;
    font-size: 13px;
    white-space: nowrap;
}

.chip-small {
    width: 25px;
    height: 25px;
    margin: 0 15px 0 20px;
    font-size: 11px;
}

/** Bookmarks **/
.bookmarks {
    display: flex;
    align-items: center;
    height: 45px;
    padding: 0 18px 8px 22px;
    border-bottom: 1px solid #c8cdcd;
    background-color: white;
    white-space: nowrap;
}

.bookmarks > .divider {
    margin: 0 18px;
}

.bookmarks a {
    display: flex;
    align-items: center;
    gap: 8px;
    margin-right: 19px;
}

.bookmarks .long {
    width: 174px;
}

.bookmarks .medium {
    width: 142px;
}

.bookmarks-end {
    display: flex;
    align-items: center;
    gap: 20px;
    margin-left: auto;
}

.bookmarks-end a {
    margin-right: 0;
}

/** Meeting **/
.meeting {
    display: flex;
    flex-direction: column;
    flex: 1;
    padding: 20px 20px 0;
    font-family: Roboto, "Noto Sans CJK TC", sans-serif;
    color: white;
}

.banner-row {
    display: flex;
    gap: 20px;
    height: 50px;
}

.alert {
    width: 50px;
    border-radius: 10px;
    background-color: #fbbc04;
    color: #202124;
}

.alert.narrow {
    width: 45px;
}

.banner {
    display: flex;
    align-items: center;
    gap: 20px;
    flex: 1;
    padding: 0 20px;
    border-radius: 10px;
    background-color: #3c4043;
    font-size: 18px;
    line-height: 24px;
    font-weight: 700;
}

.banner .chip {
    font-weight: 400;
}

.stage {
    display: grid;
    grid-template-columns: 904fr 955fr;
    gap: 20px;
    flex: 1;
    margin: 20px 0 0 1px;
}

/** Shared slide **/
.slide {
    position: relative;
    display: flex;
    flex-direction: column;
    overflow: hidden;
    border-radius: 10px;
}

.slide-art {
    position: absolute;
    top: 0;
    left: 0;
    width: 100%;
    height: 100%;
}

.slide-body {
    position: relative;
    flex: 1;
    padding: 26px 0 0 73px;
    font-weight: 700;
    white-space: nowrap;
}

.slide h1 {
    font-size: 40px;
    line-height: 56px;
    color: #ffff00;
}

.slide ul {
    padding: 27px 0 0 8px;
    list-style: none;
    font-size: 25px;
    line-height: 30px;
}

.slide li {
    position: relative;
    margin-bottom: 43px;
}

.slide li:before {
    content: "";
    position: absolute;
    top: 7px;
    left: -37px;
    width: 15px;
    height: 15px;
    border: 2px solid #129a9a;
    border-radius: 50%;
    background: radial-gradient(circle, #20c8c8 4px, #2b4545 4px);
}

.slide em {
    font-style: normal;
    color: #ffff00;
}

.pointer {
    position: absolute;
    top: 46%;
    left: 63%;
    width: 12px;
    height: 19px;
}

.slide-footer {
    position: relative;
    display: flex;
    align-items: center;
    gap: 10px;
    padding: 0 20px 5px 4px;
}

.slide-footer button {
    width: 24px;
    height: 24px;
    border: 1px solid #858585;
    border-radius: 50%;
}

.slide-footer svg {
    width: 22px;
    height: 22px;
    fill: none;
    stroke: #999;
    stroke-width: 2;
}

.slide-footer .solid {
    fill: #999;
    stroke-width: 1;
}

.page-number {
    margin-left: auto;
    font-family: "Liberation Serif", serif;
    font-size: 18px;
}

.toast {
    position: absolute;
    bottom: 40px;
    left: 9px;
    width: 430px;
    padding: 0 20px;
    border-radius: 4px;
    background-color: #3c4043;
    box-shadow: 0 4px 12px rgba(0, 0, 0, 0.4);
    font-size: 18px;
    line-height: 60px;
    color: #e8eaed;
}

/** Participant tiles **/
.tiles {
    display: flex;
    flex-direction: column;
    gap: 15px;
}

.tile-row {
    display: flex;
    gap: 15px;
    flex: 1;
}

.tile-row.last {
    padding: 0 9%;
}

.tile {
    position: relative;
    display: grid;
    place-items: center;
    flex: 1;
    border-radius: 20px;
    box-shadow: inset 0 0 40px rgba(0, 0, 0, 0.25);
}

.avatar {
    display: grid;
    place-items: center;
    width: 90px;
    height: 90px;
    border-radius: 50%;
    font-size: 38px;
    line-height: 50px;
    white-space: nowrap;
}

.avatar.latin {
    font-size: 48px;
}

.name {
    position: absolute;
    bottom: 10px;
    left: 15px;
    font-size: 20px;
    line-height: 30px;
    font-weight: 700;
    text-shadow: 0 1px 3px rgba(0, 0, 0, 0.6);
}

.muted {
    position: absolute;
    top: 10px;
    right: 10px;
    display: grid;
    place-items: center;
    width: 30px;
    height: 30px;
    border-radius: 50%;
}

.orange {
    background: radial-gradient(circle at 30% 50%, #a8563c, #a24427 50%, #99351a);
}

.orange .avatar {
    background-color: #f8511e;
}

.orange .muted,
.rust .muted {
    background-color: #641400;
    color: #ffab98;
}

.speaking {
    outline: 3px solid #ffb09c;
    outline-offset: -3px;
}

.speaking .avatar {
    width: 96px;
    height: 96px;
    border: 3px solid #ffb09c;
    box-shadow: 0 0 0 24px rgba(255, 176, 156, 0.18);
}

.teal {
    background: radial-gradient(circle at 52% 28%, #28705f, #075f50 55%, #005a4b);
}

.teal .avatar {
    background-color: #00897b;
}

.purple {
    background: radial-gradient(circle at 42% 48%, #6238a8, #4b209a 40%, #421693 75%);
}

.purple .avatar {
    background-color: #512da8;
}

.purple .muted {
    background-color: #380392;
    color: #cfa8ff;
}

.indigo {
    background: radial-gradient(circle at 78% 50%, #5d68a8, #4350a0 50%, #3a479a);
}

.indigo .avatar {
    background-color: #5c6bc0;
}

.indigo .muted {
    background-color: #1b2678;
    color: #b8c2ff;
}

.green {
    background: radial-gradient(circle at 50% 45%, #567a38, #42701f 50%, #3f691a);
}

.green .avatar {
    background-color: #689f38;
}

.green .muted {
    background-color: #1c3a04;
    color: #9ad65f;
}

.rust {
    background: radial-gradient(circle at 75% 50%, #9c543d, #91402a 40%, #8a2b11);
}

.rust .avatar {
    background-color: #bf360c;
}

/** Call bar **/
.call-bar {
    display: grid;
    grid-template-columns: 1fr auto 1fr;
    align-items: center;
    height: 100px;
}

.call-info {
    display: flex;
    align-items: center;
    padding-left: 10px;
    font-size: 19px;
    line-height: 24px;
    font-weight: 500;
}

.meeting-code {
    margin-left: 15px;
    padding-left: 15px;
    border-left: 1px solid #9aa0a6;
    font-family: Inter, sans-serif;
    font-size: 20px;
    line-height: 20px;
}

.controls {
    display: flex;
    gap: 10px;
}

.controls button {
    height: 60px;
}

.device {
    display: flex;
    border-radius: 16px;
    background-color: #601410;
    color: #f9dedc;
}

.device .more {
    width: 50px;
    padding-left: 6px;
}

.device .off {
    width: 60px;
    border-radius: 16px;
    background-color: #f9dedc;
    color: #601410;
}

.round {
    width: 70px;
    border-radius: 30px;
    background-color: #333537;
    color: #e3e3e3;
}

.round.slim {
    width: 45px;
}

.hang-up {
    width: 90px;
    border-radius: 30px;
    background-color: #dc362e;
}

.side-buttons {
    display: flex;
    justify-content: flex-end;
    margin-right: -5px;
}

.side-buttons button {
    position: relative;
    width: 60px;
    height: 60px;
    border-radius: 50%;
}

.side-buttons .hovered {
    background-color: #232325;
}

.count {
    position: absolute;
    top: -11px;
    right: 2px;
    width: 26px;
    border-radius: 50%;
    background-color: #5f6368;
    font-size: 15px;
    font-weight: 500;
    line-height: 26px;
}

.tooltip {
    position: absolute;
    bottom: 65px;
    left: -2px;
    width: 65px;
    border-radius: 4px;
    background-color: #303134;
    font-size: 15px;
    line-height: 30px;
    color: #e3e3e3;
}

/** Windows taskbar **/
.taskbar {
    display: grid;
    grid-template-columns: 1fr auto 1fr;
    align-items: center;
    height: 60px;
    border-top: 1px solid #b5c5c5;
    background: linear-gradient(90deg, #e3dcf2, #d6ecf8 33%, #c8f8f0 50%, #cdf8e2 70%, #d2fae0);
}

.apps {
    display: flex;
    align-items: center;
    grid-column: 2;
    gap: 7px;
}

.apps button {
    position: relative;
    width: 48px;
    height: 48px;
}

.search {
    display: flex;
    align-items: center;
    gap: 13px;
    width: 273px;
    height: 38px;
    padding: 0 13px;
    border-radius: 19px;
    background-color: #eefdfb;
    box-shadow: 0 1px 2px rgba(0, 0, 0, 0.25);
}

.search input {
    min-width: 0;
    font-size: 17px;
}

.search input::placeholder {
    color: #5f6368;
}

.apps .active {
    border-radius: 5px;
    background-color: rgba(255, 255, 255, 0.7);
    box-shadow: 0 0 2px rgba(0, 0, 0, 0.15);
}

.active:after,
.running:after {
    content: "";
    position: absolute;
    bottom: 0;
    width: 20px;
    height: 4px;
    border-radius: 2px;
    background-color: #0067c0;
}

.running:after {
    width: 8px;
    background-color: #6b8b80;
}

.profile {
    position: absolute;
    top: 3px;
    right: 3px;
    width: 20px;
    border-radius: 50%;
    background-color: #e8481d;
    color: white;
    font-size: 9px;
    line-height: 20px;
}

.tray {
    display: flex;
    align-items: center;
    justify-content: flex-end;
    padding: 0 24px 2px 0;
}

.tray > svg,
.tray > button {
    margin-right: 18px;
}

.tray-mic {
    fill: none;
    stroke: #1d4f9e;
    stroke-width: 2;
}

.ime {
    margin-right: 20px;
    font-size: 18px;
}

.ime.wide {
    margin: 0 26px 0 12px;
}

.status {
    display: flex;
    gap: 8px;
    margin-right: 17px;
}

.tray time {
    line-height: 20px;
    text-align: right;
}
```
